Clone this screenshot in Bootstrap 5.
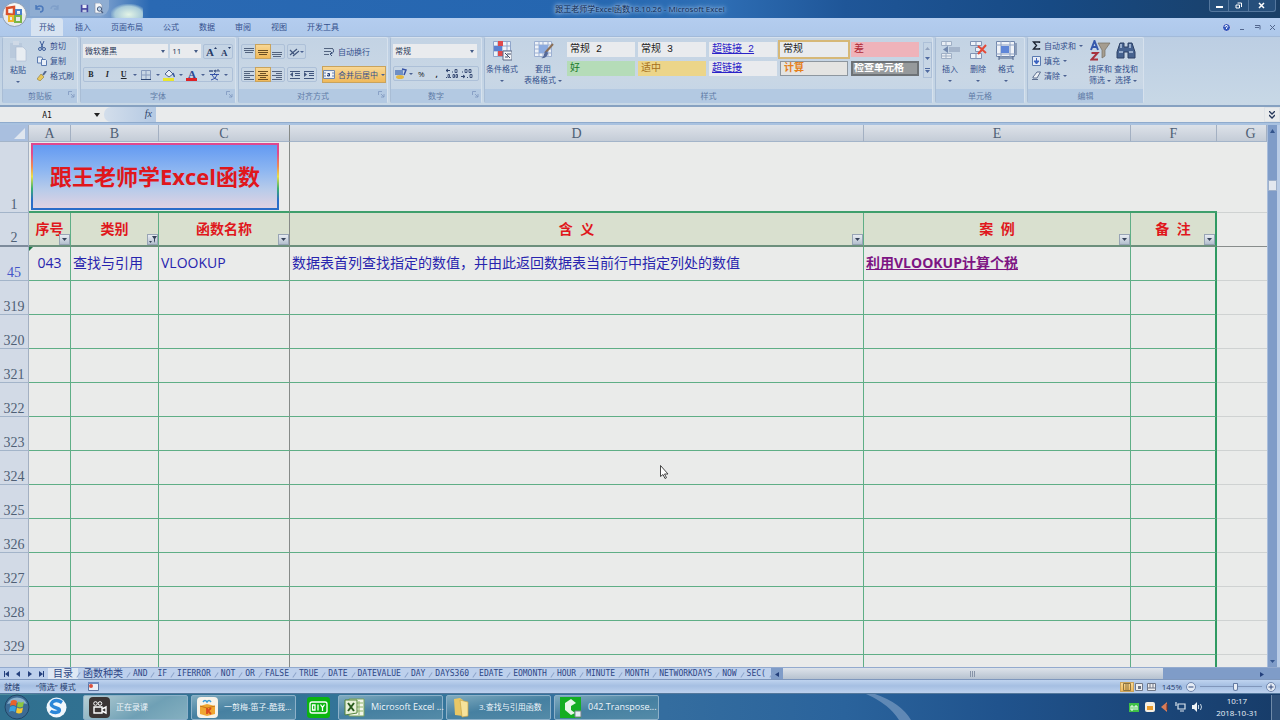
<!DOCTYPE html>
<html lang="zh-CN">
<head>
<meta charset="utf-8">
<meta name="viewport" content="width=device-width, initial-scale=1">
<title>跟王老师学Excel函数18.10.26 - Microsoft Excel</title>
<link href="https://cdn.jsdelivr.net/npm/bootstrap@5.3.0/dist/css/bootstrap.min.css" rel="stylesheet">
<style>
body{font-family:"Open Sans","Noto Sans CJK SC",sans-serif;font-size:8px;line-height:10px;color:#34508c;background:#b9cce6}
button{font:inherit;color:inherit;background:none;border:0;padding:0;line-height:inherit}
svg{display:block;flex:none}
.cr{display:inline-block;flex:none;vertical-align:middle;border:2px solid transparent;border-top-color:#4a6191;border-bottom:0;width:4px;height:2px}
/* title bar */
.titlebar{height:18px;background:linear-gradient(90deg,#8aa9d0 0,#7fa2cf 100px,#2a69b3 150px,#2566b0 45%,#2e6eb5 56%,#1f5698 66%,#174a84 82%,#1a3f66)}
.orb{left:2px;top:2px;width:25px;height:25px;z-index:3}
.quick{margin-left:30px;width:79px;height:16px;background:#8fadd2;border-radius:0 0 9px 0}
.glare{width:32px;height:14px;margin:4px 0 0 2px;background:radial-gradient(ellipse at 55% 75%,#e3f4e6,#a9cbd9 55%,transparent 75%)}
.doctitle{color:#10294f;text-shadow:0 0 3px #a9c6e8,0 0 5px #a9c6e8,0 0 6px #a9c6e8}
.winbtns{width:67px;height:12px;border:1px solid #54779e;border-top:0;border-radius:0 0 3px 3px;background:#264f7b;color:#fff}
.winbtns button+button{border-left:1px solid #54779e}
/* tabs */
.tabrow{height:18px;background:linear-gradient(#b4cdef,#aec8ea);padding-left:31px}
.tabrow .nav-link{color:#34508c;padding:4px 8px;line-height:10px;border-radius:3px 3px 0 0}
.tabrow .nav-link.active{background:#d7e3f1;color:#34508c}
.tabrow .nav{gap:0 4px}
/* ribbon */
.ribbon{height:71px;padding:0 2px 2px;background:linear-gradient(#bccee3,#c8d8e6);border-top:1px solid #a2bad9;border-bottom:2px solid #86a1c1}
.grp{display:flex;flex-direction:column;margin-right:2px;border:1px solid #d6e1ed;border-left-color:#a9bdd5;border-bottom:0;background:linear-gradient(#c3d3e4,#c9d7e5 60%,#c3d4e6);border-radius:2px}
.grp>footer{height:14px;line-height:13px;text-align:center;color:#5f7ba7;background:#b3c9e2;position:relative;margin-top:auto}
.grp>footer svg{position:absolute;right:2px;top:2px}
.g-clip{width:76px}.g-font{width:156px}.g-align{width:150px}.g-num{width:92px}.g-style{width:449px}.g-cell{width:90px}.g-edit{width:117px}
.line1{display:flex;gap:2px;padding:6px 2px 0;margin-bottom:8px}
.line2{display:flex;gap:2px;padding:0 2px}
.bigbtn{text-align:center;line-height:11px;padding:2px 1px 0;white-space:nowrap;flex:none}
.bigbtn svg{margin:0 auto 2px}
.g-cell .bigbtn{width:28px}
.tool{display:flex;align-items:center;gap:3px;height:15px;white-space:nowrap}
.segm{display:flex;align-items:center;border:1px solid #adc0d8;border-radius:2px;height:15px}
.segm button{height:13px;display:flex;align-items:center;justify-content:center;padding:0 1px;min-width:14px}
.lit{background:linear-gradient(#f8d794,#f0b95a)!important;outline:1px solid #c9a35c}
.combo{appearance:none;font-size:8px;line-height:10px;height:14px;border:0;border-radius:0;color:#263556;padding:0 2px;background:#e9ebee url("data:image/svg+xml,%3Csvg xmlns='http://www.w3.org/2000/svg' width='5' height='3'%3E%3Cpath d='M0 0h4l-2 3z' fill='%23445b86'/%3E%3C/svg%3E") no-repeat right 2px center}
.w-face{width:86px}.w-size{width:31px}.w-fmt{width:84px}
.gallery{display:grid;grid-template-columns:repeat(5,68px);grid-auto-rows:15px;gap:4px 3px;font-family:"Liberation Mono","Noto Sans CJK SC",monospace}
.gallery button{text-align:left;padding-left:3px;font-size:10px;line-height:13px;background:#e9ebee;color:#222;white-space:nowrap;overflow:hidden}
.gallery .sel{outline:2px solid #d6b878}
.gallery .good{background:#b5dcb8;color:#1b7a2e}.gallery .mid{background:#ecd589;color:#a5701c}
.gallery .bad{background:#efb3ba;color:#b02838}.gallery .calc{background:#e4e4e2;color:#e5801c;border:1px solid #8e979f;font-weight:700;line-height:11px}
.gallery .chk{background:#969a9c;color:#fff;border:2px solid #6d7276;font-weight:700;line-height:11px;padding-left:1px}
.gallery .hyp{color:#2a22c8;text-decoration:underline}
.galscroll{width:9px;height:36px;border:1px solid #adc0d8}
/* formula bar */
.fbar{height:16px;background:#e9ebec;border-bottom:1px solid #8fabcd}
.fbar input{border:0;background:#e9ebec;font:8px/14px "DejaVu Sans Mono",monospace;color:#111;min-width:0;height:15px;padding:1px 2px 0}
.fbar .nm{width:94px;text-align:center}
.fxzone{width:52px;background:linear-gradient(90deg,#d3deeb,#b4c9e3);border-radius:7px 0 0 7px;font:italic 10px/14px "Liberation Serif",serif;color:#2c4168}
/* sheet */
.pane{flex:1 1 0;min-height:0;overflow:hidden;border-top:2px solid #a9c2e0}
.cells{background:#eaebea}
.grid{border-collapse:separate;border-spacing:0;table-layout:fixed;width:100%;background:#eaebea;color:#2824ae;font-size:14px}
.grid th,.grid td{padding:0 2px;height:34px;line-height:20px;border-right:1px solid #5fae86;border-bottom:1px solid #5fae86;overflow:hidden;white-space:nowrap;position:relative;vertical-align:middle}
.grid tbody td{padding-bottom:1px}
.grid .ltr th{height:17px;padding:0;font:400 14px/15px "Liberation Serif",serif;color:#4f5f75;text-align:center;background:linear-gradient(#dde2e9,#c4ccd7);border-right:1px solid #a3b0c2;border-bottom:1px solid #a3b4c9}
.grid .ltr .corner{background:#a9bfdf}
.grid .ltr .last{padding-left:18px}
.corner svg{position:absolute;right:3px;bottom:2px}
.grid tbody th{font:400 14px/14px "Liberation Serif",serif;color:#4f5f75;background:#d2dae6;border-right:1px solid #a3b0c2;border-bottom:1px solid #a3b4c9;text-align:center;vertical-align:bottom;padding:0}
.grid tbody th.flt{color:#4455c8}
.grid .r1>*{height:71px}
.grid .r1 td{border-right:0;border-bottom:2px solid #3f9f6c}
.grid tr>.c-c{border-right:1px solid #868a88}
.grid .r1 .c-c{border-right:1px solid #868a88}
.grid tr>.c-f{border-right:2px solid #2f9a62}
.grid tr>.c-g{border-right:0;border-bottom:1px solid #cfd2d2}
.grid .r1 .c-g{border-bottom:1px solid #cfd2d2}
.grid .r2 td{background:#d9e0cf;color:#e0171c;font-weight:700;text-align:center;border-bottom:2px solid #6c8f7c;white-space:pre}
.grid .r2 .c-g{background:none;border-bottom:1px solid #888d8c}
.grid .r2 th{border-bottom:2px solid #7d8b9c}
.drop{position:absolute;right:0;bottom:0;width:11px;height:11px;background:linear-gradient(#e8ecf2,#b4bfce);border:1px solid #98a4b5;display:flex;align-items:center;justify-content:center}
.errmark{position:absolute;left:0;top:0;border:2px solid transparent;border-top-color:#1e7a48;border-left-color:#1e7a48}
.banner{height:67px;margin:1px 8px 0 0;border:2px solid transparent;background:linear-gradient(#639af2,#8db6f1 40%,#b7cbea 70%,#e0d2e2) padding-box,linear-gradient(#e0488e,#e0488e 15%,#f08a50 35%,#e8e04a 50%,#3bb070 68%,#2a6cc8 85%) border-box;color:#e0171c;font-weight:700;font-size:22px;line-height:63px;text-align:center}
.cas,.cas:hover{color:#7d1583;font-weight:700;text-decoration:underline}
.vsb{width:10px;background:#7f9cc8;margin-right:3px;border-left:1px solid #a9bddb}
.vsb i{display:block;width:9px;height:11px;background:#e3e8ef;border:1px solid #9eb0ca;margin-top:43px}
.pointer{position:absolute;left:51.6%;top:340px}
/* sheet tabs */
.sheets{height:12px;background:#bdd0ec;border-top:1px solid #93aace;font:8px/11px "DejaVu Sans Mono","Noto Sans CJK SC",monospace;color:#2e4786}
.sheets nav{flex:none}
.navbtns{width:48px}
.sheets a{color:inherit;text-decoration:none;padding:0 5px;white-space:nowrap;height:11px;position:relative}
.sheets a::after{content:"";position:absolute;right:-1px;bottom:1px;width:1px;height:6px;background:#8ba2ca;transform:rotate(35deg)}
.sheets .cjk{font-size:10px}
.sheets .on{background:#dfe8f4}
.hsb{background:#7f9cc8;min-width:0}
.hsb i{flex:0 1 380px;background:linear-gradient(#dde3ea,#b6c2d0)}
/* status bar */
.statusbar{height:14px;background:linear-gradient(#bfd3ef,#a5bfe2 45%,#bdd1ee);border-top:1px solid #7e97bd;color:#253d6e}
.views button{padding:0 2px}
.zoomer{appearance:none;width:62px;height:9px;background:linear-gradient(#8197bb,#8197bb) center/100% 1px no-repeat;margin:0}
.zoomer::-webkit-slider-thumb{appearance:none;width:5px;height:8px;background:#e9eef5;border:1px solid #647ba3;border-radius:1px 1px 3px 3px}
/* taskbar */
.dock{height:27px;background:radial-gradient(ellipse at 0 0,#64a3a7,transparent 60px),linear-gradient(90deg,#30708f 0,#34759b 35%,#346d9f 52%,#2a639c 66%,#20538d 78%,#173c69);border-top:1px solid #54789c;color:#e9f2fa}
.streak{width:70px;height:25px;margin-left:200px;background:linear-gradient(34deg,transparent 42%,#5f88b4 50%,transparent 58%);transform:scaleX(-1);transform:none}
.task{width:105px;height:25px;margin-right:3px;border:1px solid #8db1c9;border-radius:2px;background:linear-gradient(170deg,#7fabbf,#4680a1 50%,#548ba8);gap:6px;padding-left:5px;color:#eef5fa;white-space:nowrap}
.task.rec{background:linear-gradient(150deg,#b6cfd5,#6fa0b5 60%,#85b0c0)}
.task .en{font-size:9px}
.tray{gap:6px}
.clock{line-height:12px;text-align:center;width:56px}
.peek{width:9px;height:25px;border-left:1px solid #6f8aa8;background:#2d4f78}
</style>
</head>
<body class="vh-100 d-flex flex-column overflow-hidden">

<header class="titlebar position-relative d-flex flex-shrink-0">
  <button class="orb position-absolute" aria-label="Office"><svg width="25" height="25" viewBox="0 0 25 25"><circle cx="12.500" cy="12.500" r="12" fill="#e6e8ea" stroke="#8b9db6"/><path d="M2 12a10.500 10.500 0 0 1 21 0c-6-3-14-3-21 0z" fill="#f8f8f6"/><path d="M5 6l7-1v8l-7-1z" fill="none" stroke="#d8502c" stroke-width="2.500"/><path d="M14 8h5v5h-5z" fill="none" stroke="#4a80c8" stroke-width="2"/><path d="M7 14h4v5H7z" fill="none" stroke="#f0b52c" stroke-width="2"/><path d="M13 14h6v6h-6z" fill="none" stroke="#7ab648" stroke-width="2"/></svg></button>
  <div class="quick d-flex align-items-center gap-1 ps-1">
    <button aria-label="撤销"><svg width="11" height="10" viewBox="0 0 11 10"><path d="M2 2v4h4M2 6c1-4 7-4 7 0 0 2-1 3-3 3" fill="none" stroke="#4c79bb" stroke-width="1.500"/></svg></button>
    <button aria-label="恢复" class="me-3"><svg width="11" height="10" viewBox="0 0 11 10"><path d="M9 2v4H5M9 6C8 2 2 2 2 6" fill="none" stroke="#7f9fc9" stroke-width="1.300"/></svg></button>
    <button aria-label="保存"><svg width="9" height="11" viewBox="0 0 11 11"><path d="M1 1h9v9H1z" fill="#4646a0"/><path d="M3 1h5v4H3z" fill="#e6ebf6"/><path d="M3 7h5v3H3z" fill="#c3cbe4"/></svg></button>
    <button aria-label="打印预览"><svg width="11" height="11" viewBox="0 0 11 11"><path d="M2 0h5l2 2v8H2z" fill="#f4f6f8" stroke="#8797af" stroke-width=".7"/><circle cx="6.500" cy="6" r="2.200" fill="#bcd4ec" stroke="#4a5d80"/><path d="M8 8l2 2" stroke="#4a5d80" stroke-width="1.300"/></svg></button>
  </div>
  <div class="glare"></div>
  <div class="doctitle position-absolute start-50 translate-middle-x pt-1">跟王老师学Excel函数18.10.26 - Microsoft Excel</div>
  <div class="winbtns d-flex ms-auto me-1">
    <button class="flex-fill d-flex justify-content-center align-items-center" aria-label="最小化"><svg width="7" height="7"><path d="M0 4h7v2H0z" fill="#fff"/></svg></button>
    <button class="flex-fill d-flex justify-content-center align-items-center" aria-label="还原"><svg width="7" height="7"><path d="M2.500 1h4v4M1 3h3.500v3H1z" fill="none" stroke="#fff"/></svg></button>
    <button class="flex-fill d-flex justify-content-center align-items-center px-1" aria-label="关闭"><svg width="7" height="7"><path d="M1 1l5 5M6 1L1 6" stroke="#fff" stroke-width="1.500"/></svg></button>
  </div>
</header>

<div class="tabrow d-flex flex-shrink-0">
  <ul class="nav flex-nowrap">
    <li class="nav-item"><a class="nav-link active" href="#">开始</a></li>
    <li class="nav-item"><a class="nav-link" href="#">插入</a></li>
    <li class="nav-item"><a class="nav-link" href="#">页面布局</a></li>
    <li class="nav-item"><a class="nav-link" href="#">公式</a></li>
    <li class="nav-item"><a class="nav-link" href="#">数据</a></li>
    <li class="nav-item"><a class="nav-link" href="#">审阅</a></li>
    <li class="nav-item"><a class="nav-link" href="#">视图</a></li>
    <li class="nav-item"><a class="nav-link" href="#">开发工具</a></li>
  </ul>
  <div class="ms-auto d-flex align-items-center gap-2 pe-1">
    <button aria-label="帮助"><svg width="9" height="9"><circle cx="4.500" cy="4.500" r="4" fill="#3759bd" stroke="#d5dff0"/><path d="M3 4q0-2 2-1.500 1.500 1-.5 2.500v1" fill="none" stroke="#fff"/></svg></button>
    <button aria-label="最小化窗口"><svg width="7" height="7"><path d="M1 5h4v1H1z" fill="#53678e"/></svg></button>
    <button aria-label="还原窗口"><svg width="7" height="7"><path d="M1 1.500h5v4M1 3.500h4" fill="none" stroke="#53678e"/></svg></button>
    <button aria-label="关闭窗口"><svg width="7" height="7"><path d="M1 1l5 5M6 1L1 6" stroke="#53678e"/></svg></button>
  </div>
</div>

<main class="ribbon d-flex flex-shrink-0">
  <section class="grp g-clip">
    <div class="d-flex ps-1">
      <button class="bigbtn me-2"><svg width="20" height="22" viewBox="0 0 20 22"><path d="M2 3h12v15H2z" fill="#b9c9dc"/><path d="M5 1h6v4H5z" fill="#cfd9e6"/><path d="M8 7h7l3 3v11H8z" fill="#e8edf2" stroke="#a9bbd0" stroke-width=".6"/></svg>粘贴<br><i class="cr"></i></button>
      <div>
        <button class="tool"><svg width="10" height="10" viewBox="0 0 10 10"><path d="M3 0l3 7M7 0L4 7" stroke="#3f5f9b"/><circle cx="3" cy="8" r="1.500" fill="none" stroke="#3f5f9b"/><circle cx="7" cy="8" r="1.500" fill="none" stroke="#3f5f9b"/></svg>剪切</button>
        <button class="tool"><svg width="10" height="10" viewBox="0 0 10 10"><path d="M.5 1h4l1 1v5h-5z" fill="#e9eff7" stroke="#5a7ab0"/><path d="M4.500 3.500h4l1 1v5h-5z" fill="#e9eff7" stroke="#5a7ab0"/></svg>复制</button>
        <button class="tool"><svg width="10" height="10" viewBox="0 0 10 10"><path d="M9 0L6 4" stroke="#53678e" stroke-width="2"/><path d="M4 3l3 3-4 4-3-2z" fill="#e8c75a" stroke="#8d7a3b" stroke-width=".6"/></svg>格式刷</button>
      </div>
    </div>
    <footer>剪贴板<svg width="7" height="7"><path d="M.5 4V.5H4M3 3l3 3M6 3v3H3" fill="none" stroke="#7d97bf" stroke-width=".8"/></svg></footer>
  </section>

  <section class="grp g-font">
    <div class="line1">
      <select class="combo w-face" aria-label="字体"><option>微软雅黑</option></select>
      <select class="combo w-size" aria-label="字号"><option>11</option></select>
      <div class="segm"><button aria-label="增大字号"><svg width="11" height="11"><text x="0" y="10" font-family="Liberation Serif" font-weight="700" font-size="11" fill="#263b66">A</text><path d="M8 3l1.500-2L11 3z" fill="#263b66"/></svg></button><button aria-label="减小字号"><svg width="11" height="11"><text x="1" y="10" font-family="Liberation Serif" font-weight="700" font-size="9" fill="#263b66">A</text><path d="M8 1h3L9.500 3z" fill="#263b66"/></svg></button></div>
    </div>
    <div class="line2 font-serif">
    <div class="segm flex-grow-1 justify-content-between pe-1" style="font-family:'Liberation Serif',serif">
      <button class="fw-bold text-dark">B</button><button class="fst-italic fw-bold text-dark">I</button><button class="fw-bold text-dark text-decoration-underline">U</button><i class="cr"></i>
      <button aria-label="边框"><svg width="10" height="10"><path d="M.5.500h9v9h-9zM5 0v10M0 5h10" fill="none" stroke="#879bbd"/><path d="M0 9.500h10" stroke="#2e4775"/></svg></button><i class="cr"></i>
      <button aria-label="填充颜色"><svg width="12" height="12"><path d="M2 5l4-4 4 4-4 3z" fill="#e9eef5" stroke="#4d648f"/><path d="M10 4l1.500 4" stroke="#3858a0" stroke-width="1.500"/><path d="M0 9h11v3H0z" fill="#e9e62a"/></svg></button><i class="cr"></i>
      <button aria-label="字体颜色"><svg width="12" height="12"><text x="2" y="9" font-family="Liberation Serif" font-weight="700" font-size="11" fill="#2b4a93">A</text><path d="M0 9h11v3H0z" fill="#de2226"/></svg></button><i class="cr"></i>
      <button aria-label="拼音"><svg width="12" height="13"><path d="M0 2l1 2 1-2 1 2 1-2M5 3h2q0-1-1-1-1 1 0 2h1M8 4V2h2v2" fill="none" stroke="#2b4378" stroke-width=".8"/><path d="M1 6.500h9M5.500 5v1.500M3 7q2 4 6 5M8 7q-1 4-6 5" fill="none" stroke="#3551a5"/></svg></button><i class="cr"></i>
    </div>
    </div>
    <footer>字体<svg width="7" height="7"><path d="M.5 4V.5H4M3 3l3 3M6 3v3H3" fill="none" stroke="#7d97bf" stroke-width=".8"/></svg></footer>
  </section>

  <section class="grp g-align">
    <div class="line1">
      <div class="segm"><button aria-label="顶端对齐"><svg width="10" height="10"><path d="M0 1.500h10M0 3.500h10M1 5.500h8" stroke="#53647f"/></svg></button><button class="lit" aria-label="垂直居中"><svg width="10" height="10"><path d="M0 3.500h10M0 5.500h10M1 7.500h8" stroke="#6b4e22"/></svg></button><button aria-label="底端对齐"><svg width="10" height="10"><path d="M0 5.500h10M0 7.500h10M1 9.500h8" stroke="#53647f"/></svg></button></div>
      <div class="segm me-3"><button aria-label="方向"><svg width="11" height="10"><path d="M1 8l7-6M4 9l6-5M1 3l4 4" stroke="#40557c" stroke-width="1.200"/></svg><i class="cr"></i></button></div>
      <button class="tool"><svg width="11" height="11"><path d="M0 2.500h9M0 5.500h7M0 8.500h5" stroke="#53647f"/><path d="M9 3q2 4-3 5l2-2M6 8l2 2" fill="none" stroke="#40557c"/></svg>自动换行</button>
    </div>
    <div class="line2">
      <div class="segm"><button aria-label="左对齐"><svg width="10" height="10"><path d="M0 1.500h10M0 3.500h6M0 5.500h10M0 7.500h6M0 9.500h10" stroke="#53647f"/></svg></button><button class="lit" aria-label="居中"><svg width="10" height="10"><path d="M0 1.500h10M2 3.500h6M0 5.500h10M2 7.500h6M0 9.500h10" stroke="#6b4e22"/></svg></button><button aria-label="右对齐"><svg width="10" height="10"><path d="M0 1.500h10M4 3.500h6M0 5.500h10M4 7.500h6M0 9.500h10" stroke="#53647f"/></svg></button></div>
      <div class="segm me-1"><button aria-label="减少缩进"><svg width="10" height="10"><path d="M0 1.500h10M5 3.500h5M5 5.500h5M0 8.500h10" stroke="#40557c"/><path d="M3 2v5L0 4.500z" fill="#40557c"/></svg></button><button aria-label="增加缩进"><svg width="10" height="10"><path d="M0 1.500h10M5 3.500h5M5 5.500h5M0 8.500h10" stroke="#40557c"/><path d="M0 2v5l3-2.500z" fill="#40557c"/></svg></button></div>
      <button class="tool lit"><svg width="12" height="9"><path d="M.5.500h11v8H.500zM0 3h12M0 6h12" fill="#e9eef6" stroke="#7086ad"/><path d="M3 2h6v5H3z" fill="#f4f4f4"/><path d="M4.500 3.500h2v2.500h-2v-1h2" fill="none" stroke="#24407c"/></svg>合并后居中<i class="cr"></i></button>
    </div>
    <footer>对齐方式<svg width="7" height="7"><path d="M.5 4V.5H4M3 3l3 3M6 3v3H3" fill="none" stroke="#7d97bf" stroke-width=".8"/></svg></footer>
  </section>

  <section class="grp g-num">
    <div class="line1"><select class="combo w-fmt" aria-label="数字格式"><option>常规</option></select></div>
    <div class="line2">
    <div class="segm flex-grow-1 justify-content-between pe-1">
      <button aria-label="会计数字格式"><svg width="12" height="11"><path d="M0 2h8v5H0z" fill="#6f8fc5"/><path d="M7 1l4 1-2 5" fill="none" stroke="#3551a5" stroke-width="1.500"/><ellipse cx="5" cy="9" rx="4" ry="2" fill="#e3b844"/></svg></button><i class="cr"></i><button class="text-dark">%</button><button class="text-dark fw-bold">,</button>
      <button aria-label="增加小数位数"><svg width="12" height="11"><path d="M0 2.500h4M2 1L0 2.500 2 4M6 4h1M4 9.500h1M0 9.500h1" fill="none" stroke="#32466f"/><path d="M9 1.500h2v3H9zM2 6.500h1.500v3H2zM7 6.500h1.500v3H7zM10 6.500h1.500v3H10z" fill="none" stroke="#32466f" stroke-width=".9"/></svg></button><button aria-label="减少小数位数"><svg width="12" height="11"><path d="M0 8.500h4M2 7l2 1.500L2 10M6 9.500h1M1 4h1" fill="none" stroke="#32466f"/><path d="M9 6.500h2v3H9zM4 1.500h2v3H4zM8 1.500h2v3H8z" fill="none" stroke="#32466f" stroke-width=".9"/></svg></button>
    </div>
    </div>
    <footer>数字<svg width="7" height="7"><path d="M.5 4V.5H4M3 3l3 3M6 3v3H3" fill="none" stroke="#7d97bf" stroke-width=".8"/></svg></footer>
  </section>

  <section class="grp g-style">
    <div class="d-flex align-items-start gap-1">
      <button class="bigbtn"><svg width="20" height="21" viewBox="0 0 20 21"><path d="M1.500 1.500h17v15h-17z" fill="#eef2f8" stroke="#8fa5ca"/><path d="M1 6h18M1 11h18M6 1v16M10 1v16M15 1v16" stroke="#8fa5ca"/><path d="M6 1h5v5H6zM6 11h5v5H6z" fill="#df4a4c"/><path d="M2 6h8v5H2z" fill="#5b7fd0"/><path d="M11 11h9v9h-9z" fill="#f3f5f8" stroke="#5d6b86"/><path d="M13 13l5 5M13 17h3M15 14h4" stroke="#3c4b68"/></svg>条件格式<br><i class="cr"></i></button>
      <button class="bigbtn"><svg width="21" height="21" viewBox="0 0 21 21"><path d="M1.500 1.500h17v15h-17z" fill="#eef2f8" stroke="#9cb0d2"/><path d="M1 5h18M1 9h18M1 13h18M6 1v16M10 1v16M15 1v16" stroke="#9cb0d2"/><path d="M6 5h9v8H6z" fill="#8cabe0"/><path d="M20 4l-8 9" stroke="#8a6e55" stroke-width="2"/><path d="M13 11l2 2q-1 6-7 5 3-1 3-4z" fill="#54699a"/></svg>套用<br>表格格式 <i class="cr"></i></button>
      <div class="gallery pt-1">
        <button>常规 2</button><button>常规 3</button><button class="hyp">超链接 2</button><button class="sel">常规</button><button class="bad">差</button>
        <button class="good">好</button><button class="mid">适中</button><button class="hyp">超链接</button><button class="calc">计算</button><button class="chk">检查单元格</button>
      </div>
      <div class="galscroll mt-1 d-flex flex-column justify-content-around align-items-center"><svg width="5" height="3"><path d="M0 3h5L2.500 0z" fill="#93a4bf"/></svg><svg width="5" height="3"><path d="M0 0h5L2.500 3z" fill="#4f6aa0"/></svg><svg width="5" height="5"><path d="M0 0h5v1H0zM0 2h5L2.500 5z" fill="#4f6aa0"/></svg></div>
    </div>
    <footer>样式</footer>
  </section>

  <section class="grp g-cell">
    <div class="d-flex">
      <button class="bigbtn"><svg width="21" height="21" viewBox="0 0 21 21"><path d="M1.500 1.500h10v4h-10zM1.500 13.500h10v5h-10zM6 1v5M6 13v6M1 16h11" fill="#e9eef4" stroke="#9fafc5"/><path d="M9 7h11v5H9z" fill="#a5b5cb"/><path d="M8 6L3 9.500 8 13z" fill="#7389ae"/></svg>插入<br><i class="cr"></i></button>
      <button class="bigbtn"><svg width="21" height="21" viewBox="0 0 21 21"><path d="M2.500 1.500h11v4h-11zM7.500 7.500h6v4h-6zM2.500 13.500h11v5h-11zM8 1v5M8 13v6" fill="#eef2f8" stroke="#8194b5"/><path d="M10 6l8 7M18 5l-8 9" stroke="#e44a38" stroke-width="2"/></svg>删除<br><i class="cr"></i></button>
      <button class="bigbtn"><svg width="22" height="21" viewBox="0 0 22 21"><path d="M1.500 1.500h18v15h-18z" fill="#f0f3f8" stroke="#7288ad"/><path d="M1 5h19M1 14h19M6 1v16M15 1v16" stroke="#8ea1c2"/><path d="M6 6h8v7H6z" fill="#5f86d8"/><path d="M4 18h14M4 16v4M18 16v4M21 3v12" stroke="#4f6289"/></svg>格式<br><i class="cr"></i></button>
    </div>
    <footer>单元格</footer>
  </section>

  <section class="grp g-edit">
    <div class="d-flex ps-1">
      <div class="me-1">
        <button class="tool"><svg width="9" height="9"><path d="M7.500 2V1H1.500l3 3.500-3 3.500h6V7" fill="none" stroke="#1c2433" stroke-width="1.400"/></svg>自动求和<i class="cr"></i></button>
        <button class="tool"><svg width="9" height="10"><path d="M.5.500h8v9h-8z" fill="#e6ecf6" stroke="#5a7ab0"/><path d="M4.500 2v4M2 5l2.500 3L7 5z" fill="#3b62c0" stroke="#3b62c0"/></svg>填充<i class="cr"></i></button>
        <button class="tool"><svg width="9" height="9"><path d="M1 6l4-5h3.500L5 7H1z" fill="#eef1f5" stroke="#5c6f90"/><path d="M0 8.500h6" stroke="#5c6f90"/></svg>清除<i class="cr"></i></button>
      </div>
      <button class="bigbtn"><svg width="21" height="21" viewBox="0 0 21 21"><path d="M1 10L4.500 1 8 10M2.500 7h4" fill="none" stroke="#3558ac" stroke-width="2"/><path d="M1.500 13h6l-6 6.500h6.500" fill="none" stroke="#a8323e" stroke-width="2"/><path d="M8 3h12l-5 7v6l-3 2v-8z" fill="#a59d90" stroke="#746d62" stroke-width=".7"/></svg>排序和<br>筛选 <i class="cr"></i></button>
      <button class="bigbtn"><svg width="20" height="21" viewBox="0 0 20 21"><path d="M4 3h4v4h4V3h4l3 9v6h-7v-6H8v6H1v-6z" fill="#46628f" stroke="#2c4165"/><path d="M3 12h4M13 12h4M5 4v4M14 4v4" stroke="#b5c7e2" stroke-width="1.500"/></svg>查找和<br>选择 <i class="cr"></i></button>
    </div>
    <footer>编辑</footer>
  </section>
</main>

<div class="fbar d-flex flex-shrink-0">
  <input class="nm" value="A1" aria-label="名称框">
  <button class="me-1" aria-label="名称列表"><svg width="6" height="4"><path d="M0 0h6L3 4z" fill="#222"/></svg></button>
  <div class="fxzone text-end pe-1">fx</div>
  <input class="flex-grow-1" aria-label="编辑栏">
  <button class="border px-1" aria-label="展开编辑栏"><svg width="6" height="8"><path d="M0 0l3 3 3-3M0 4l3 3 3-3" fill="none" stroke="#26375a" stroke-width="1.300"/></svg></button>
</div>

<div class="pane d-flex position-relative">
  <div class="cells flex-grow-1 overflow-hidden">
  <table class="grid">
    <colgroup><col style="width:29px"><col style="width:42px"><col style="width:88px"><col style="width:131px"><col><col style="width:267px"><col style="width:86px"><col style="width:50px"></colgroup>
    <thead><tr class="ltr"><th class="corner"><svg width="11" height="11"><path d="M11 0v11H0z" fill="#dfe6ef"/></svg></th><th>A</th><th>B</th><th class="c-c">C</th><th>D</th><th>E</th><th>F</th><th class="last">G</th></tr></thead>
    <tbody>
    <tr class="r1"><th>1</th><td colspan="3" class="c-c"><div class="banner">跟王老师学Excel函数</div></td><td></td><td></td><td></td><td class="c-g"></td></tr>
    <tr class="r2"><th>2</th>
      <td>序号<button class="drop" aria-label="筛选序号"><svg width="5" height="3"><path d="M0 0h5L2.500 3z" fill="#37435a"/></svg></button></td>
      <td>类别<button class="drop" aria-label="筛选类别"><svg width="8" height="8"><path d="M3 0h5L6 3v4L5 5V3zM0 5h3L1.500 7z" fill="#37435a"/></svg></button></td>
      <td class="c-c">函数名称<button class="drop" aria-label="筛选函数名称"><svg width="5" height="3"><path d="M0 0h5L2.500 3z" fill="#37435a"/></svg></button></td>
      <td>含  义<button class="drop" aria-label="筛选含义"><svg width="5" height="3"><path d="M0 0h5L2.500 3z" fill="#37435a"/></svg></button></td>
      <td>案  例<button class="drop" aria-label="筛选案例"><svg width="5" height="3"><path d="M0 0h5L2.500 3z" fill="#37435a"/></svg></button></td>
      <td class="c-f">备  注<button class="drop" aria-label="筛选备注"><svg width="5" height="3"><path d="M0 0h5L2.500 3z" fill="#37435a"/></svg></button></td>
      <td class="c-g"></td></tr>
    <tr><th class="flt">45</th><td class="text-center"><i class="errmark"></i>043</td><td>查找与引用</td><td class="c-c">VLOOKUP</td><td>数据表首列查找指定的数值，并由此返回数据表当前行中指定列处的数值</td><td><a class="cas" href="#">利用VLOOKUP计算个税</a></td><td class="c-f"></td><td class="c-g"></td></tr>
    <tr><th>319</th><td></td><td></td><td class="c-c"></td><td></td><td></td><td class="c-f"></td><td class="c-g"></td></tr>
    <tr><th>320</th><td></td><td></td><td class="c-c"></td><td></td><td></td><td class="c-f"></td><td class="c-g"></td></tr>
    <tr><th>321</th><td></td><td></td><td class="c-c"></td><td></td><td></td><td class="c-f"></td><td class="c-g"></td></tr>
    <tr><th>322</th><td></td><td></td><td class="c-c"></td><td></td><td></td><td class="c-f"></td><td class="c-g"></td></tr>
    <tr><th>323</th><td></td><td></td><td class="c-c"></td><td></td><td></td><td class="c-f"></td><td class="c-g"></td></tr>
    <tr><th>324</th><td></td><td></td><td class="c-c"></td><td></td><td></td><td class="c-f"></td><td class="c-g"></td></tr>
    <tr><th>325</th><td></td><td></td><td class="c-c"></td><td></td><td></td><td class="c-f"></td><td class="c-g"></td></tr>
    <tr><th>326</th><td></td><td></td><td class="c-c"></td><td></td><td></td><td class="c-f"></td><td class="c-g"></td></tr>
    <tr><th>327</th><td></td><td></td><td class="c-c"></td><td></td><td></td><td class="c-f"></td><td class="c-g"></td></tr>
    <tr><th>328</th><td></td><td></td><td class="c-c"></td><td></td><td></td><td class="c-f"></td><td class="c-g"></td></tr>
    <tr><th>329</th><td></td><td></td><td class="c-c"></td><td></td><td></td><td class="c-f"></td><td class="c-g"></td></tr>
    <tr><th></th><td></td><td></td><td class="c-c"></td><td></td><td></td><td class="c-f"></td><td class="c-g"></td></tr>
    </tbody>
  </table>
  </div>
  <div class="vsb d-flex flex-column flex-shrink-0 align-items-center"><svg class="mt-1" width="5" height="8"><path d="M0 4h5L2.500 0z" fill="#33548c"/></svg><i></i><svg class="mt-auto mb-1" width="5" height="3"><path d="M0 0h5L2.500 3z" fill="#33548c"/></svg></div>
  <svg class="pointer" width="9" height="14" viewBox="0 0 9 14"><path d="M.5.500v11l2.500-2 2 4 1.500-.8-2-3.700H8z" fill="#fff" stroke="#333" stroke-width=".9"/></svg>
</div>

<div class="sheets d-flex flex-shrink-0">
  <nav class="d-flex">
    <div class="navbtns d-flex align-items-center justify-content-around flex-shrink-0">
      <svg width="5" height="6"><path d="M0 0h1v6H0zM5 0v6L1 3z" fill="#24407c"/></svg><svg width="4" height="6"><path d="M4 0v6L0 3z" fill="#24407c"/></svg><svg width="4" height="6"><path d="M0 0v6l4-3z" fill="#24407c"/></svg><svg width="5" height="6"><path d="M4 0h1v6H4zM0 0v6l4-3z" fill="#24407c"/></svg>
    </div>
    <a class="cjk on" href="#">目录</a><a class="cjk" href="#">函数种类</a><a href="#">AND</a><a href="#">IF</a><a href="#">IFERROR</a><a href="#">NOT</a><a href="#">OR</a><a href="#">FALSE</a><a href="#">TRUE</a><a href="#">DATE</a><a href="#">DATEVALUE</a><a href="#">DAY</a><a href="#">DAYS360</a><a href="#">EDATE</a><a href="#">EOMONTH</a><a href="#">HOUR</a><a href="#">MINUTE</a><a href="#">MONTH</a><a href="#">NETWORKDAYS</a><a href="#">NOW</a><a href="#">SEC(</a>
  </nav>
  <div class="hsb d-flex flex-grow-1 align-items-stretch"><svg class="m-1" width="4" height="5"><path d="M4 0v5L0 2.500z" fill="#24407c"/></svg><i class="d-flex justify-content-center align-items-center"><svg width="5" height="6"><path d="M.5 0v6M2.500 0v6M4.500 0v6" stroke="#8794a8"/></svg></i><svg class="ms-auto mt-1 me-3" width="4" height="5"><path d="M0 0v5l4-2.500z" fill="#24407c"/></svg></div>
</div>

<footer class="statusbar d-flex align-items-center flex-shrink-0 ps-1">
  <span class="me-3">就绪</span><span class="me-2">“筛选” 模式</span>
  <button class="ms-1" aria-label="录制宏"><svg width="11" height="9"><path d="M.5.500h10v8H.500z" fill="#e9eef6" stroke="#5f76a2"/><path d="M0 0h11v2H0z" fill="#6f8cc0"/><circle cx="3" cy="4" r="2" fill="#d8503e"/></svg></button>
  <div class="ms-auto d-flex align-items-center gap-1">
    <div class="views d-flex">
      <button class="lit" aria-label="普通"><svg width="8" height="8"><path d="M.5.500h7v7h-7zM3 0v8M5 0v8" fill="none" stroke="#8a7340"/></svg></button><button aria-label="页面布局"><svg width="8" height="8"><path d="M.5.500h7v7h-7z" fill="#eee" stroke="#6e7788"/><path d="M3 3h3v3H3z" fill="#6e7788"/></svg></button><button aria-label="分页预览"><svg width="9" height="8"><path d="M.5.500h8v7h-8zM3 0v5M6 0v5M0 5h9" fill="#eee" stroke="#6e7788"/></svg></button>
    </div>
    <span>145%</span>
    <button aria-label="缩小"><svg width="10" height="10"><circle cx="5" cy="5" r="4.500" fill="#e6edf6" stroke="#6f86ad"/><path d="M2.500 4.500h5v1h-5z" fill="#33497a"/></svg></button>
    <input class="zoomer" type="range" min="10" max="290" value="172" aria-label="显示比例">
    <button class="me-1" aria-label="放大"><svg width="10" height="10"><circle cx="5" cy="5" r="4.500" fill="#e6edf6" stroke="#6f86ad"/><path d="M2.500 5h5M5 2.500v5" stroke="#33497a"/></svg></button>
  </div>
</footer>

<div class="dock d-flex align-items-center flex-shrink-0">
  <button class="ms-1" aria-label="开始菜单"><svg width="26" height="26" viewBox="0 0 26 26"><circle cx="13" cy="13" r="12" fill="#3c6b94" stroke="#1f4767"/><path d="M3 10a11 11 0 0 1 20 0q-10-3-20 0z" fill="#8ab0cc"/><path d="M7 7q3-2 6 0l-1 5q-3-2-6 0z" fill="#e8622c"/><path d="M14 7.500q3 2 6 0l-1 5q-3 2-6 0z" fill="#8cc63f"/><path d="M6 13q3-2 6 0l-1 5q-3-2-6 0z" fill="#3aa0e0"/><path d="M13 13.500q3 2 6 0l-1 5q-3 2-6 0z" fill="#f8c830"/></svg></button>
  <button class="ms-3 me-3" aria-label="搜狗"><svg width="21" height="21" viewBox="0 0 21 21"><circle cx="10.500" cy="10.500" r="10" fill="#f1f7fc"/><path d="M16 5.500Q11 2 7 4.500C3 8 7 10 10.500 11c4 1 4 4-1 4.500q-3 0-5-1.500" fill="none" stroke="#2b86d8" stroke-width="3.400"/></svg></button>
  <button class="task rec d-flex align-items-center"><svg width="21" height="21" viewBox="0 0 21 21"><rect width="21" height="21" rx="4" fill="#3b3534"/><path d="M5 10h8v6H5zM13 12l4-2v6l-4-2z" fill="none" stroke="#fff" stroke-width="1.400"/><circle cx="6.500" cy="6.500" r="1.800" fill="none" stroke="#fff"/><circle cx="11" cy="6.500" r="1.800" fill="none" stroke="#fff"/></svg><span>正在录课</span></button>
  <button class="task d-flex align-items-center"><svg width="21" height="21" viewBox="0 0 21 21"><rect width="21" height="21" rx="4" fill="#f7f3ea"/><path d="M3 9l7-2 8 2v8l-8 2-7-2z" fill="#efa632"/><path d="M3 9l7 2 8-2" fill="none" stroke="#c97518"/><path d="M10 11v6M14 11l-3 3 3 3" stroke="#d9481e" stroke-width="1.800" fill="none"/><path d="M6 5q2-3 4 0 2-3 4 0" stroke="#3b9bd8" stroke-width="1.500" fill="none"/></svg><span>一剪梅-笛子-酷我...</span></button>
  <button class="ms-2 me-2" aria-label="爱奇艺"><svg width="23" height="21" viewBox="0 0 23 21"><rect width="23" height="21" rx="3" fill="#0bb510"/><rect x="3" y="5" width="17" height="11" rx="2" fill="none" stroke="#fff" stroke-width="1.300"/><path d="M5.500 8h2.500v5H5.500zM11 7.500v6M13.500 7.500l2 3 2-3M15.500 10v4" fill="none" stroke="#fff" stroke-width="1.300"/></svg></button>
  <button class="task d-flex align-items-center"><svg width="21" height="21" viewBox="0 0 21 21"><path d="M5 2h15v17H5z" fill="#f2f6ea" stroke="#7aa35a"/><path d="M7 6h12M7 10h12M7 14h12M15 4v14" stroke="#8db36b"/><path d="M1 3h12v13L1 18z" fill="#e8f1da" stroke="#55843a"/><path d="M4 6l6 8M10 6l-6 8" stroke="#2a5b1e" stroke-width="2"/></svg><span class="en">Microsoft Excel ...</span></button>
  <button class="task d-flex align-items-center"><svg width="21" height="21" viewBox="0 0 21 21"><path d="M2 2l6-1 3 2v16l-8-1z" fill="#e9c765"/><path d="M8 3l8 2v14l-6 1z" fill="#f6e29b" stroke="#c9a548" stroke-width=".7"/></svg><span>3.查找与引用函数</span></button>
  <button class="task d-flex align-items-center"><svg width="22" height="21" viewBox="0 0 22 21"><rect width="21" height="21" fill="#14ae22"/><path d="M5 6l6-4 5 4-5 3v4l4 3-4 2-6-5z" fill="#e7f6e8"/><path d="M15 14h6v6h-6z" fill="#e9eef2" stroke="#74838e"/></svg><span class="en">042.Transpose...</span></button>
  <svg class="ms-auto" width="70" height="26" viewBox="0 0 70 26"><path d="M5 0h9q26 9 36 26H38Q28 10 5 0z" fill="#6f94bd" opacity=".8"/></svg>
  <div class="tray ms-auto d-flex align-items-center">
    <svg width="10" height="9"><rect width="10" height="9" fill="#3fc046"/><path d="M2 3h2v4H2zM6 7V3h2v4" fill="none" stroke="#fff"/></svg>
    <svg width="10" height="10"><rect width="10" height="10" rx="2" fill="#f6efe2"/><path d="M2 4h6v4H2z" fill="#ea9c2c"/></svg>
    <svg width="8" height="10"><path d="M6 0v10L0 5z" fill="#d87c58"/><path d="M6 2v6" stroke="#7a2d1f"/></svg>
    <svg width="11" height="10"><path d="M3 2h7v5H3zM5 9h4M1 0v4" fill="none" stroke="#dde6ee" stroke-width="1.200"/></svg>
    <svg width="11" height="10"><path d="M0 3h2l3-3v10L2 7H0z" fill="#eef3f7"/><path d="M6.500 3v4M8.500 2q2 3 0 6" fill="none" stroke="#c7d6e3"/></svg>
    <div class="clock">10:17<br>2018-10-31</div>
    <div class="peek"></div>
  </div>
</div>
<script src="https://cdn.jsdelivr.net/npm/bootstrap@5.3.0/dist/js/bootstrap.bundle.min.js"></script>
</body>
</html>
